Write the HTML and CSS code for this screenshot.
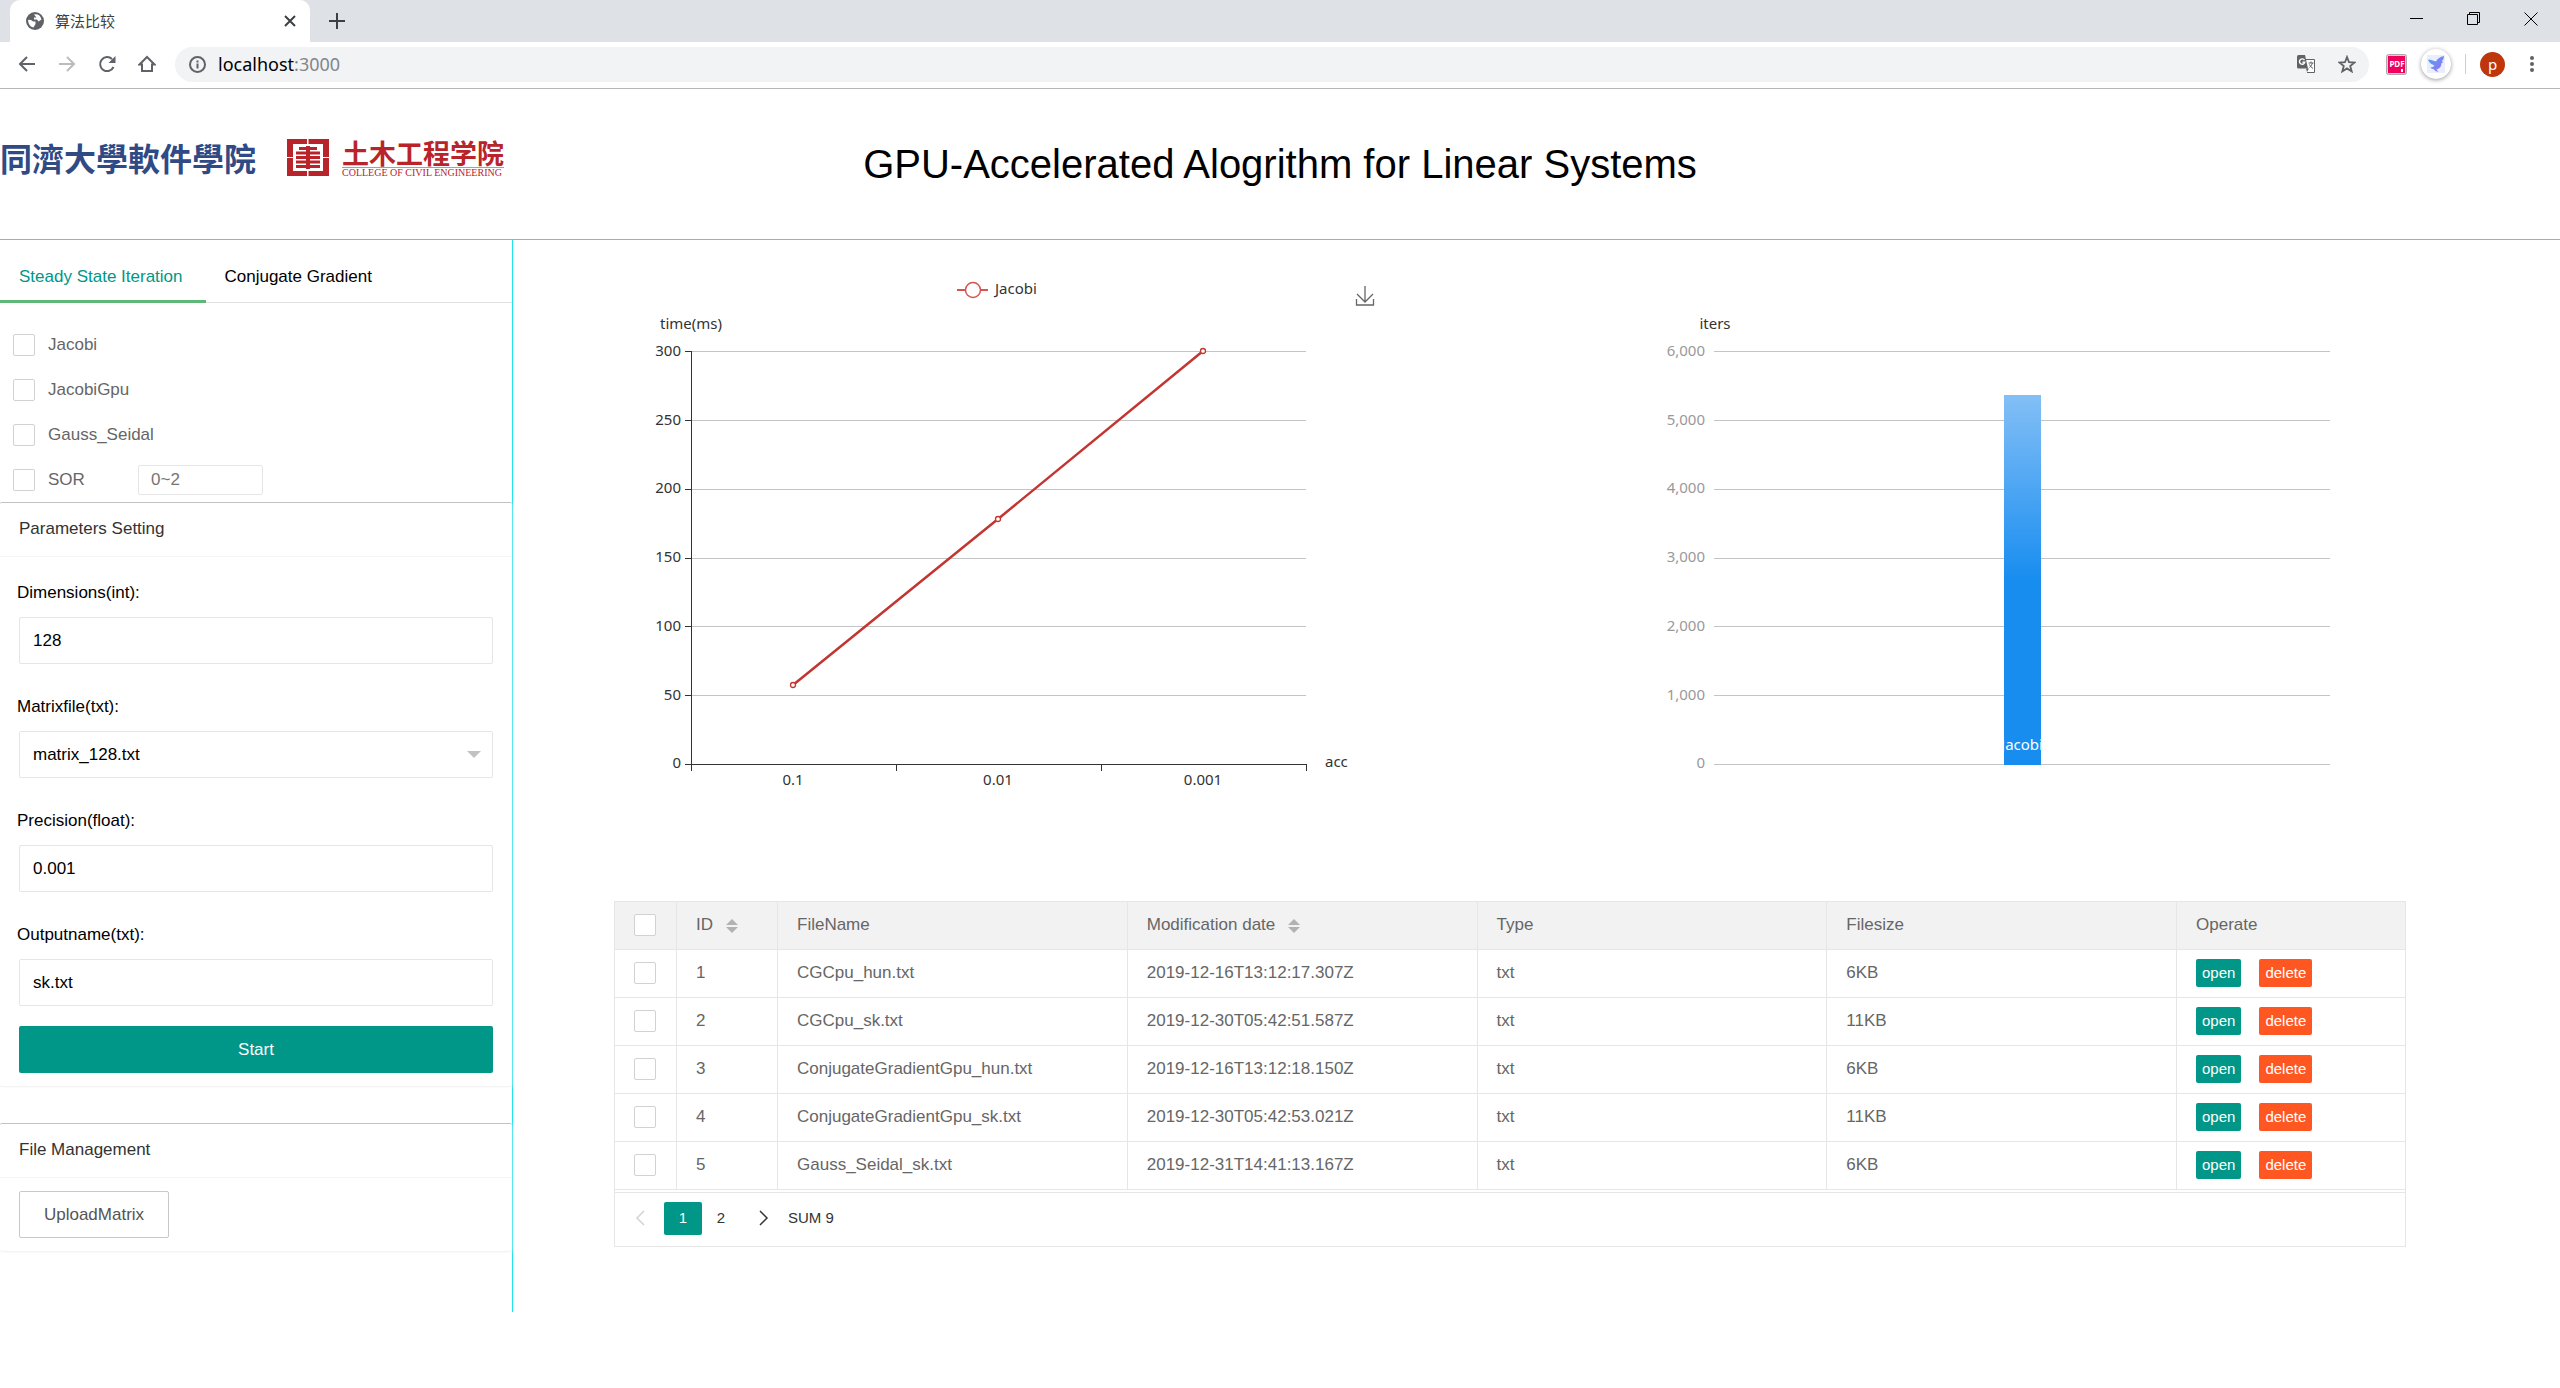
FILE: index.html
```html
<!DOCTYPE html>
<html lang="en">
<head>
<meta charset="utf-8">
<title>算法比较</title>
<link rel="stylesheet" href="styles.css">
</head>
<body>
<div class="browser">
  <div class="tabstrip">
    <div class="browser-tab">
      <svg class="favicon" width="18" height="18" viewBox="0 0 18 18"><circle cx="9" cy="9" r="9" fill="#5f6368"/><path d="M2 8q3-1 5 1.500h2.500v2.500l-2 3.500q-5-1-5.500-7.500zM8 2.500q6-1 7.500 5l-3 2-1.500-2H8V5.500h2.500z" fill="#fff"/></svg>
      <span class="browser-tab-title">算法比较</span>
      <button class="icon-button" aria-label="Close tab"><svg width="12" height="12" viewBox="0 0 12 12"><path d="M1 1l10 10M11 1L1 11" stroke="#3c4043" stroke-width="2"/></svg></button>
    </div>
    <button class="icon-button new-tab" aria-label="New tab"><svg width="16" height="16" viewBox="0 0 16 16"><path d="M8 0v16M0 8h16" stroke="#3c4043" stroke-width="2"/></svg></button>
    <div class="window-controls">
      <button class="icon-button" aria-label="Minimize"><svg width="14" height="14" viewBox="0 0 14 14"><path d="M0 6.500h13" stroke="#000"/></svg></button>
      <button class="icon-button" aria-label="Restore"><svg width="14" height="14" viewBox="0 0 14 14"><path d="M.5 2.500h10v10H.5zM2.500 2.500V.5h10v10h-2" fill="none" stroke="#000"/></svg></button>
      <button class="icon-button" aria-label="Close"><svg width="14" height="14" viewBox="0 0 14 14"><path d="M.5 .5l13 13M13.500 .5l-13 13" stroke="#000"/></svg></button>
    </div>
  </div>
  <div class="toolbar">
    <button class="icon-button" aria-label="Back"><svg width="18" height="18" viewBox="0 0 18 18"><path d="M17 9H2M9 2L2 9l7 7" fill="none" stroke="#5f6368" stroke-width="2"/></svg></button>
    <button class="icon-button" aria-label="Forward"><svg width="18" height="18" viewBox="0 0 18 18"><path d="M1 9h15M9 2l7 7-7 7" fill="none" stroke="#babcbe" stroke-width="2"/></svg></button>
    <button class="icon-button" aria-label="Reload"><svg width="18" height="18" viewBox="0 0 18 18"><path d="M15.500 12A7 7 0 1 1 14 4" fill="none" stroke="#5f6368" stroke-width="2"/><path d="M17.500 1v7h-7z" fill="#5f6368"/></svg></button>
    <button class="icon-button" aria-label="Home"><svg width="18" height="18" viewBox="0 0 18 18"><path d="M1.500 9.500L9 2l7.500 7.500H14V16H4V9.500z" fill="none" stroke="#5f6368" stroke-width="2"/></svg></button>
    <div class="omnibox">
      <svg width="17" height="17" viewBox="0 0 17 17"><circle cx="8.500" cy="8.500" r="7.500" fill="none" stroke="#5f6368" stroke-width="2"/><path d="M8.500 7.500v5M8.500 4.500v2" stroke="#5f6368" stroke-width="2"/></svg>
      <span class="url">localhost<span class="url-port">:3000</span></span>
      <button class="icon-button" aria-label="Translate"><svg width="18" height="18" viewBox="0 0 18 18"><path d="M8 4.500h9.500v13H10" fill="#fff" stroke="#5f6368"/><path d="M1.500 0H8l3 13.500H1.500Q0 13.500 0 12V1.500Q0 0 1.500 0z" fill="#5f6368"/><path d="M9 13.500h3L10 17z" fill="#5f6368"/><path d="M7.500 5.200A2.700 2.700 0 1 0 7.800 7.200H5.500" fill="none" stroke="#fff" stroke-width="1.400"/><path d="M11.500 8h5M14 6.500V8M15.500 8q-1 3-3 4.500M12.500 9.500q1 2.500 3.500 4" fill="none" stroke="#5f6368"/></svg></button>
      <button class="icon-button" aria-label="Bookmark"><svg width="18" height="18" viewBox="0 0 18 18"><path d="M9 2l2 5.200 5.500.3-4.300 3.500 1.500 5.400L9 13.400l-4.700 3 1.500-5.400L1.500 7.500l5.500-.3z" fill="none" stroke="#5f6368" stroke-width="1.800"/></svg></button>
    </div>
    <div class="extensions">
      <button class="icon-button" aria-label="PDF"><svg width="21" height="21" viewBox="0 0 21 21"><rect x=".5" y=".5" width="20" height="20" rx="2" fill="#d8cfcf" stroke="#aaa"/><rect x="2" y="2" width="17" height="17" fill="#f0005c"/><text class="pdf-text" x="11" y="13" text-anchor="middle">PDF</text><path d="M16 15v3" stroke="#fff" stroke-width="2"/></svg></button>
      <button class="icon-button bird" aria-label="Bird"><svg width="18" height="18" viewBox="0 0 18 18"><defs><linearGradient id="wing" x1="0" y1="0" x2="1" y2="1"><stop offset="0" stop-color="#4fa3f7"/><stop offset="1" stop-color="#9c6cf5"/></linearGradient></defs><rect width="18" height="18" fill="#e9eefb"/><path d="M1 5q1-1 3 0l5 1.500Q11 2 17 1q0 3-2 5l1 1.500-1.500.5q0 5-5 6.500l2 2.500q-3 0-5-3-2 0-3-1.500 3 0 4-2Q3 9 1 5z" fill="url(#wing)"/></svg></button>
      <span class="divider"></span>
      <button class="icon-button avatar" aria-label="Profile">p</button>
      <button class="icon-button" aria-label="Menu"><svg width="4" height="18" viewBox="0 0 4 18"><circle cx="2" cy="3" r="2" fill="#5f6368"/><circle cx="2" cy="9" r="2" fill="#5f6368"/><circle cx="2" cy="15" r="2" fill="#5f6368"/></svg></button>
    </div>
  </div>
</div>

<header class="page-header">
  <div class="logos">
    <span class="logo-software">同濟大學軟件學院</span>
    <span class="logo-civil">
      <svg width="42" height="37" viewBox="0 0 42 37"><path d="M0 0h42v37H0z" fill="#b9242b"/><path d="M6 5h30v27H6z" fill="#fff"/><path d="M20 0h1.500v5H20zM20 32h1.500v5H20zM0 18h6v1H0zM36 18h6v1h-6z" fill="#fff"/><path d="M12 9.500h18M9 14h24M9 18.500h24M9 23h24M9 27.500h24" stroke="#b9242b" stroke-width="2.800"/><path d="M21 7v23" stroke="#b9242b" stroke-width="4"/></svg>
      <span class="logo-civil-text">
        <span class="logo-civil-name">土木工程学院</span>
        <span class="logo-civil-sub">COLLEGE OF CIVIL ENGINEERING</span>
      </span>
    </span>
  </div>
  <h1 class="page-title">GPU-Accelerated Alogrithm for Linear Systems</h1>
</header>

<div class="layout">
  <aside class="sidebar">
    <nav class="tabs">
      <a class="tab tab-active" href="#steady">Steady State Iteration</a>
      <a class="tab" href="#conjugate">Conjugate Gradient</a>
    </nav>
    <div class="methods">
      <label class="method"><input class="check" type="checkbox">Jacobi</label>
      <label class="method"><input class="check" type="checkbox">JacobiGpu</label>
      <label class="method"><input class="check" type="checkbox">Gauss_Seidal</label>
      <div class="method-row">
        <label class="method"><input class="check" type="checkbox">SOR</label>
        <input class="sor-input" type="text" placeholder="0~2" aria-label="SOR factor">
      </div>
    </div>
    <section class="card">
      <h2 class="card-title">Parameters Setting</h2>
      <form class="card-form">
        <div class="field"><label class="field-label" for="dim">Dimensions(int):</label><input class="field-input" id="dim" type="text" value="128"></div>
        <div class="field"><label class="field-label" for="matrix">Matrixfile(txt):</label><div class="select-wrap"><select class="field-input" id="matrix"><option>matrix_128.txt</option></select></div></div>
        <div class="field"><label class="field-label" for="precision">Precision(float):</label><input class="field-input" id="precision" type="text" value="0.001"></div>
        <div class="field"><label class="field-label" for="output">Outputname(txt):</label><input class="field-input" id="output" type="text" value="sk.txt"></div>
        <button class="start-button" type="button">Start</button>
      </form>
    </section>
    <section class="card">
      <h2 class="card-title">File Management</h2>
      <div class="card-actions"><button class="upload-button" type="button">UploadMatrix</button></div>
    </section>
  </aside>

  <main class="content">
    <div class="charts">
      <svg class="chart" viewBox="0 0 770 563" role="img" aria-label="Time by accuracy">
        <g stroke="#c4c4c4"><path d="M77 75.500h615M77 144.500h615M77 213.500h615M77 282.500h615M77 350.500h615M77 419.500h615"/></g>
        <path d="M77.500 75v420M71 488.500h622M71 75.500h6M71 144.500h6M71 213.500h6M71 282.500h6M71 350.500h6M71 419.500h6M282.500 488v7M487.500 488v7M692.500 488v7" fill="none" stroke="#333"/>
        <g class="axis-text" text-anchor="end">
          <text x="67" y="80">300</text><text x="67" y="149">250</text><text x="67" y="217">200</text><text x="67" y="286">150</text><text x="67" y="355">100</text><text x="67" y="424">50</text><text x="67" y="492">0</text>
        </g>
        <g class="axis-text" text-anchor="middle">
          <text x="77" y="53">time(ms)</text><text x="179" y="509">0.1</text><text x="384" y="509">0.01</text><text x="589" y="509">0.001</text>
        </g>
        <text class="axis-text" x="711" y="491">acc</text>
        <path d="M179 409L384 243L589 75" fill="none" stroke="#c23531" stroke-width="2.500"/>
        <g fill="#fff" stroke="#c23531" stroke-width="1.300"><circle cx="179" cy="409" r="2.500"/><circle cx="384" cy="243" r="2.500"/><circle cx="589" cy="75" r="2.500"/></g>
        <path d="M343 14h31" stroke="#d9534f" stroke-width="2"/><circle cx="359" cy="14" r="7.500" fill="#fff" stroke="#d9534f" stroke-width="1.500"/>
        <text class="axis-text" x="381" y="18">Jacobi</text>
        <path d="M742.500 23v6h17v-6M751 10v15M743 18l8 8 8-8" fill="none" stroke="#666" stroke-width="1.300"/>
      </svg>
      <svg class="chart" viewBox="0 0 770 563" role="img" aria-label="Iterations">
        <defs><linearGradient id="bar" x1="0" y1="0" x2="0" y2="1"><stop offset="0" stop-color="#83bff6"/><stop offset=".5" stop-color="#188df0"/><stop offset="1" stop-color="#188df0"/></linearGradient></defs>
        <path d="M78 75.500h616M78 144.500h616M78 213.500h616M78 282.500h616M78 350.500h616M78 419.500h616M78 488.500h616" stroke="#c4c4c4"/>
        <g class="axis-text axis-muted" text-anchor="end">
          <text x="69" y="80">6,000</text><text x="69" y="149">5,000</text><text x="69" y="217">4,000</text><text x="69" y="286">3,000</text><text x="69" y="355">2,000</text><text x="69" y="424">1,000</text><text x="69" y="492">0</text>
        </g>
        <text class="axis-text" x="79" y="53" text-anchor="middle">iters</text>
        <rect x="368" y="119" width="37" height="370" fill="url(#bar)"/>
        <text class="axis-text bar-label" x="386" y="474" text-anchor="middle">Jacobi</text>
      </svg>
    </div>

    <div class="files">
      <table class="file-table">
        <colgroup><col class="col-check"><col class="col-id"><col><col><col><col><col class="col-operate"></colgroup>
        <thead>
          <tr><th><input class="check" type="checkbox" aria-label="Select all"></th><th>ID<span class="sort"></span></th><th>FileName</th><th>Modification date<span class="sort"></span></th><th>Type</th><th>Filesize</th><th>Operate</th></tr>
        </thead>
        <tbody>
          <tr><td><input class="check" type="checkbox" aria-label="Select 1"></td><td>1</td><td>CGCpu_hun.txt</td><td>2019-12-16T13:12:17.307Z</td><td>txt</td><td>6KB</td><td><div class="ops"><button class="op">open</button><button class="op op-delete">delete</button></div></td></tr>
          <tr><td><input class="check" type="checkbox" aria-label="Select 2"></td><td>2</td><td>CGCpu_sk.txt</td><td>2019-12-30T05:42:51.587Z</td><td>txt</td><td>11KB</td><td><div class="ops"><button class="op">open</button><button class="op op-delete">delete</button></div></td></tr>
          <tr><td><input class="check" type="checkbox" aria-label="Select 3"></td><td>3</td><td>ConjugateGradientGpu_hun.txt</td><td>2019-12-16T13:12:18.150Z</td><td>txt</td><td>6KB</td><td><div class="ops"><button class="op">open</button><button class="op op-delete">delete</button></div></td></tr>
          <tr><td><input class="check" type="checkbox" aria-label="Select 4"></td><td>4</td><td>ConjugateGradientGpu_sk.txt</td><td>2019-12-30T05:42:53.021Z</td><td>txt</td><td>11KB</td><td><div class="ops"><button class="op">open</button><button class="op op-delete">delete</button></div></td></tr>
          <tr><td><input class="check" type="checkbox" aria-label="Select 5"></td><td>5</td><td>Gauss_Seidal_sk.txt</td><td>2019-12-31T14:41:13.167Z</td><td>txt</td><td>6KB</td><td><div class="ops"><button class="op">open</button><button class="op op-delete">delete</button></div></td></tr>
        </tbody>
      </table>
      <div class="pager">
        <button class="page" aria-label="Previous page"><svg width="10" height="16" viewBox="0 0 10 16"><path d="M9 1L2 8l7 7" fill="none" stroke="#d2d2d2" stroke-width="1.500"/></svg></button>
        <button class="page page-active">1</button>
        <button class="page">2</button>
        <button class="page page-next" aria-label="Next page"><svg width="10" height="16" viewBox="0 0 10 16"><path d="M1 1l7 7-7 7" fill="none" stroke="#333" stroke-width="1.500"/></svg></button>
        <span>SUM 9</span>
      </div>
    </div>
  </main>
</div>
</body>
</html>
```
FILE: styles.css
```css
* { box-sizing: border-box; }
body { margin: 0; background: #fff; color: #000; font: 17px/24px "Liberation Sans", Arial, sans-serif; }
button, input, select { font: inherit; }
a { color: inherit; text-decoration: none; }
svg { display: block; }
.icon-button { display: grid; place-items: center; padding: 0; border: 0; background: none; }

/* Browser frame */
.tabstrip { display: flex; align-items: center; height: 42px; padding-left: 10px; background: #dee1e6; }
.browser-tab { display: flex; align-items: center; gap: 11px; width: 300px; height: 42px; padding: 0 14px 0 16px; border-radius: 10px 10px 0 0; background: #fff; }
.browser-tab-title { flex: 1; color: #3c4043; font-size: 15px; font-family: "Noto Sans CJK SC", sans-serif; }
.new-tab { margin-left: 19px; }
.window-controls { display: flex; gap: 43px; margin: 0 22px 4px auto; }
.toolbar { display: flex; align-items: center; gap: 22px; height: 47px; padding: 0 26px 2px 18px; border-bottom: 1px solid #b6b6b6; }
.omnibox { display: flex; flex: 1; align-items: center; gap: 23px; height: 35px; margin-left: -3px; padding: 0 13px 0 14px; border-radius: 18px; background: #f1f3f4; }
.url { flex: 1; margin-left: -11px; font-size: 18px; font-family: "Noto Sans", sans-serif; }
.url-port { color: #80868b; }
.extensions { display: flex; align-items: center; gap: 14px; margin-left: -5px; }
.pdf-text { fill: #fff; font: bold 8px "Noto Sans", sans-serif; }
.bird { width: 30px; height: 30px; border-radius: 50%; box-shadow: 0 1px 4px #999; }
.divider { width: 1px; height: 20px; background: #ccc; }
.avatar { width: 25px; height: 25px; margin-right: 11px; border-radius: 50%; background: #bf360c; color: #fff; font: 15px/20px "Noto Sans", sans-serif; }

/* Page header */
.page-header { display: grid; grid-template-columns: 1fr auto 1fr; align-items: center; height: 151px; border-bottom: 1px solid #1fe5ee; }
.logos { display: flex; gap: 31px; align-items: center; padding-bottom: 12px; }
.logo-software { padding-bottom: 2px; color: #2f4a85; font: bold 32px/38px "Noto Sans CJK TC", sans-serif; white-space: nowrap; }
.logo-civil { display: flex; gap: 13px; color: #b9242b; white-space: nowrap; }
.logo-civil-text { display: flex; flex-direction: column; }
.logo-civil-name { border-bottom: 1px solid #d88; font: bold 27px/28px "Noto Sans CJK SC", sans-serif; }
.logo-civil-sub { font: 10px/10px "Liberation Serif", serif; }
.page-title { margin: 0; font-size: 40px; font-weight: 400; line-height: 48px; }

.layout { display: grid; grid-template-columns: calc(20% + 1px) 1fr; }

/* Sidebar */
.sidebar { padding-bottom: 61px; border-right: 1px solid #1fe5ee; }
.tabs { display: flex; height: 63px; padding-top: 13px; border-bottom: 1px solid #e2e2e2; }
.tab { height: 50px; padding: 0 23px 0 19px; line-height: 48px; }
.tab-active { border-bottom: 3px solid #5fb878; color: #009688; }
.methods { display: flex; flex-direction: column; gap: 21px; padding: 30px 13px 7px; color: #666; }
.method { display: flex; align-items: center; gap: 13px; height: 24px; }
.method-row { display: flex; align-items: center; height: 30px; margin-top: -3px; }
.method-row .method { width: 125px; }
.check { appearance: none; width: 22px; height: 22px; margin: 0; border: 1px solid #d2d2d2; border-radius: 2px; background: #fff; }
.sor-input { width: 125px; height: 30px; padding: 0 12px; border: 1px solid #e6e6e6; border-radius: 2px; }
.sor-input::placeholder { color: #757575; }
.card { border-top: 1px solid #c2c2c2; border-radius: 2px; box-shadow: 0 1px 2px #f0f0f0; }
.card + .card { margin-top: 37px; }
.card-title { height: 54px; margin: 0; padding: 0 19px; border-bottom: 1px solid #f6f6f6; color: #333; font-size: 17px; font-weight: 400; line-height: 52px; }
.card-form { padding: 24px 19px 13px; }
.field { margin-bottom: 31px; }
.field:nth-of-type(4) { margin-bottom: 20px; }
.field-label { display: block; margin: 0 0 12px -2px; }
.field-input { display: block; width: 100%; height: 47px; padding: 0 13px; border: 1px solid #e6e6e6; border-radius: 2px; background: #fff; color: #000; appearance: none; }
.select-wrap { position: relative; }
.select-wrap::after { content: ""; position: absolute; top: 20px; right: 12px; border: 7px solid transparent; border-top-color: #c2c2c2; }
.start-button { display: block; width: 100%; height: 47px; border: 0; border-radius: 2px; background: #009688; color: #fff; }
.card-actions { padding: 13px 19px; }
.upload-button { width: 150px; height: 47px; padding: 0; border: 1px solid #c9c9c9; border-radius: 2px; background: #fff; color: #555; }

/* Charts */
.content { padding: 36px 154px 0 101px; }
.charts { display: grid; grid-template-columns: 1fr 1fr; gap: 252px; }
.chart { width: 100%; }
.axis-text { fill: #333; font: 15px "Noto Sans", sans-serif; }
.axis-muted { fill: #999; }
.bar-label { fill: #fff; }

/* File table */
.files { margin-top: 62px; border: 1px solid #e6e6e6; color: #666; }
.file-table { width: 100%; border-collapse: separate; border-spacing: 0; table-layout: fixed; }
.col-check { width: 62px; }
.col-id { width: 101px; }
.col-operate { width: 228px; }
.file-table th, .file-table td { height: 48px; padding: 0 19px 1px; border-right: 1px solid #e6e6e6; border-bottom: 1px solid #e6e6e6; font-weight: 400; text-align: left; white-space: nowrap; }
.file-table th:last-child, .file-table td:last-child { border-right: 0; }
.file-table th { background: #f2f2f2; }
.file-table .check { display: block; }
.sort { display: inline-grid; gap: 2px; margin-left: 13px; vertical-align: middle; }
.sort::before, .sort::after { content: ""; border: 6px solid transparent; }
.sort::before { border-top-width: 0; border-bottom-color: #b2b2b2; }
.sort::after { border-bottom-width: 0; border-top-color: #b2b2b2; }
.ops { display: flex; gap: 18px; }
.op { height: 28px; padding: 0 6px; border: 0; border-radius: 2px; background: #009688; color: #fff; font-size: 15px; }
.op-delete { background: #ff5722; }
.pager { display: flex; align-items: center; height: 54px; margin-top: 2px; padding: 0 6px 3px; border-top: 1px solid #e6e6e6; color: #333; font-size: 15px; }
.page { display: grid; place-items: center; width: 38px; height: 33px; padding: 0; border: 0; border-radius: 2px; background: none; color: #333; }
.page-active { margin-left: 5px; background: #009688; color: #fff; }
.page-next { margin: 0 5px; }
```
